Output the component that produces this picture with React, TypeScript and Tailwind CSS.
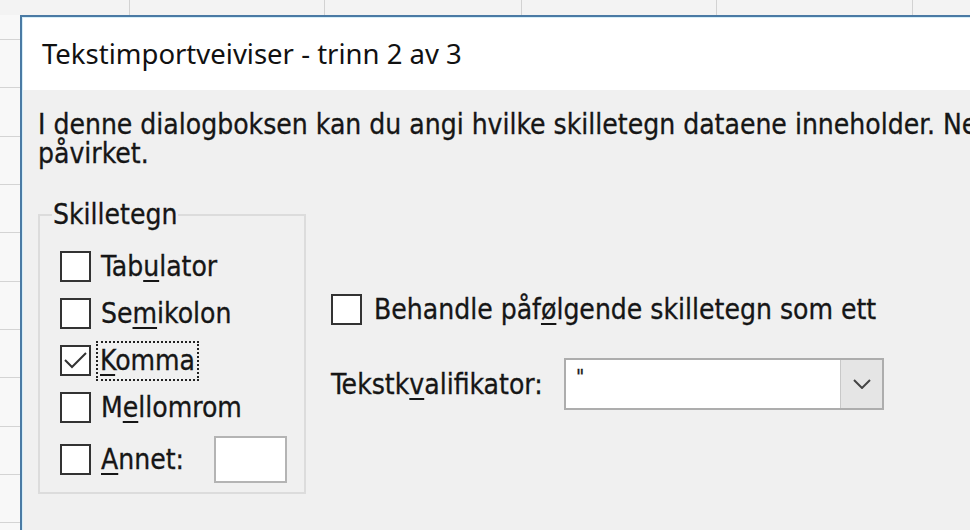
import React from 'react';

const cols = [130, 195, 197, 195, 196, 57];
const rows = [25, 48, 49, 48, 48, 49, 48, 48, 49, 48, 48];

const Box: React.FC<{ checked?: boolean }> = ({ checked }) => (
  <span className="flex h-[31px] w-[31px] shrink-0 items-center justify-center border-2 border-[#333333] bg-white">
    {checked && (
      <svg width="27" height="27" viewBox="0 0 27 27" fill="none">
        <polyline points="3,13 10,20 24,6" stroke="#333333" strokeWidth="2" />
      </svg>
    )}
  </span>
);

const Key: React.FC<{ children: React.ReactNode }> = ({ children }) => (
  <span className="underline decoration-2 underline-offset-[4px]">{children}</span>
);

export default function App() {
  return (
    <div className="flex h-[530px] w-[970px] flex-col overflow-hidden bg-white font-['DejaVu_Sans_Condensed','DejaVu_Sans',sans-serif] text-[#161616] [-webkit-text-stroke:0.3px_#161616]">
      {/* sheet column header strip */}
      <div className="flex h-[15px] shrink-0 bg-[#f3f3f3]">
        {cols.map((w, i) => (
          <div key={i} style={{ width: w }} className="h-full shrink-0 border-r border-[#d2d2d2] last:border-r-0" />
        ))}
      </div>

      <div className="flex min-h-0 flex-1">
        {/* sheet row strip */}
        <div className="flex w-[20px] shrink-0 flex-col bg-[#f8f8f8]">
          {rows.map((h, i) => (
            <div key={i} style={{ height: h }} className="shrink-0 border-b border-[#d4d4d4]" />
          ))}
        </div>

        {/* dialog */}
        <div className="flex min-w-0 flex-1 flex-col border-l-2 border-t-2 border-[#4a7aa4]">
          <div className="flex min-w-0 flex-1 flex-col border-l border-t border-[#d6eef8]">
            <div className="flex h-[72px] shrink-0 items-center bg-white pl-[19px] font-['Noto_Sans',sans-serif] text-[27.5px] text-[#111] [-webkit-text-stroke:0px]">
              Tekstimportveiviser - trinn 2 av 3
            </div>

            <div className="flex flex-1 flex-col overflow-hidden bg-[#f0f0f0] pl-[15px] pt-[20px] text-[28px] leading-[29px]">
              <div className="whitespace-nowrap">
                I denne dialogboksen kan du angi hvilke skilletegn dataene inneholder. Nedenfor kan du se hvordan teksten blir
              </div>
              <div className="whitespace-nowrap">påvirket.</div>

              <div className="mt-[32px] flex">
                <fieldset className="w-[268px] shrink-0 border-2 border-[#dcdcdc] pb-[9px]">
                  <legend className="ml-[12px] px-[1px] leading-[30px]">Skilletegn</legend>
                  <div className="mt-[21px] flex flex-col pl-[20px]">
                    <div className="flex h-[31px] items-center gap-[10px]">
                      <Box />
                      <span>
                        Tab<Key>u</Key>lator
                      </span>
                    </div>
                    <div className="mt-[16px] flex h-[31px] items-center gap-[10px]">
                      <Box />
                      <span>
                        Se<Key>m</Key>ikolon
                      </span>
                    </div>
                    <div className="mt-[16px] flex h-[31px] items-center gap-[5px]">
                      <Box checked />
                      <span className="border-2 border-dotted border-[#222] px-[2px] leading-[36px]">
                        <Key>K</Key>omma
                      </span>
                    </div>
                    <div className="mt-[16px] flex h-[31px] items-center gap-[10px]">
                      <Box />
                      <span>
                        M<Key>e</Key>llomrom
                      </span>
                    </div>
                    <div className="mt-[13px] flex h-[47px] items-center gap-[10px]">
                      <Box />
                      <span className="w-[103px]">
                        <Key>A</Key>nnet:
                      </span>
                      <span className="h-[47px] w-[73px] border-2 border-[#b4b4b4] bg-white" />
                    </div>
                  </div>
                </fieldset>

                <div className="ml-[25px] flex flex-col pt-[94px]">
                  <div className="flex h-[31px] items-center gap-[12px]">
                    <Box />
                    <span>
                      Behandle påf<Key>ø</Key>lgende skilletegn som ett
                    </span>
                  </div>
                  <div className="mt-[33px] flex items-center">
                    <span className="w-[233px]">
                      Tekstk<Key>v</Key>alifikator:
                    </span>
                    <div className="flex h-[52px] w-[320px] border-2 border-[#adadad] bg-white">
                      <span className="flex-1 pl-[10px] pt-[2px] text-[20px] leading-[28px]">"</span>
                      <span className="flex w-[42px] items-center justify-center border-l border-[#c8c8c8] bg-[#e5e5e5]">
                        <svg width="18" height="10" viewBox="0 0 18 10" fill="none">
                          <polyline points="1,1 9,9 17,1" stroke="#444" strokeWidth="2" />
                        </svg>
                      </span>
                    </div>
                  </div>
                </div>
              </div>
            </div>
          </div>
        </div>
      </div>
    </div>
  );
}
